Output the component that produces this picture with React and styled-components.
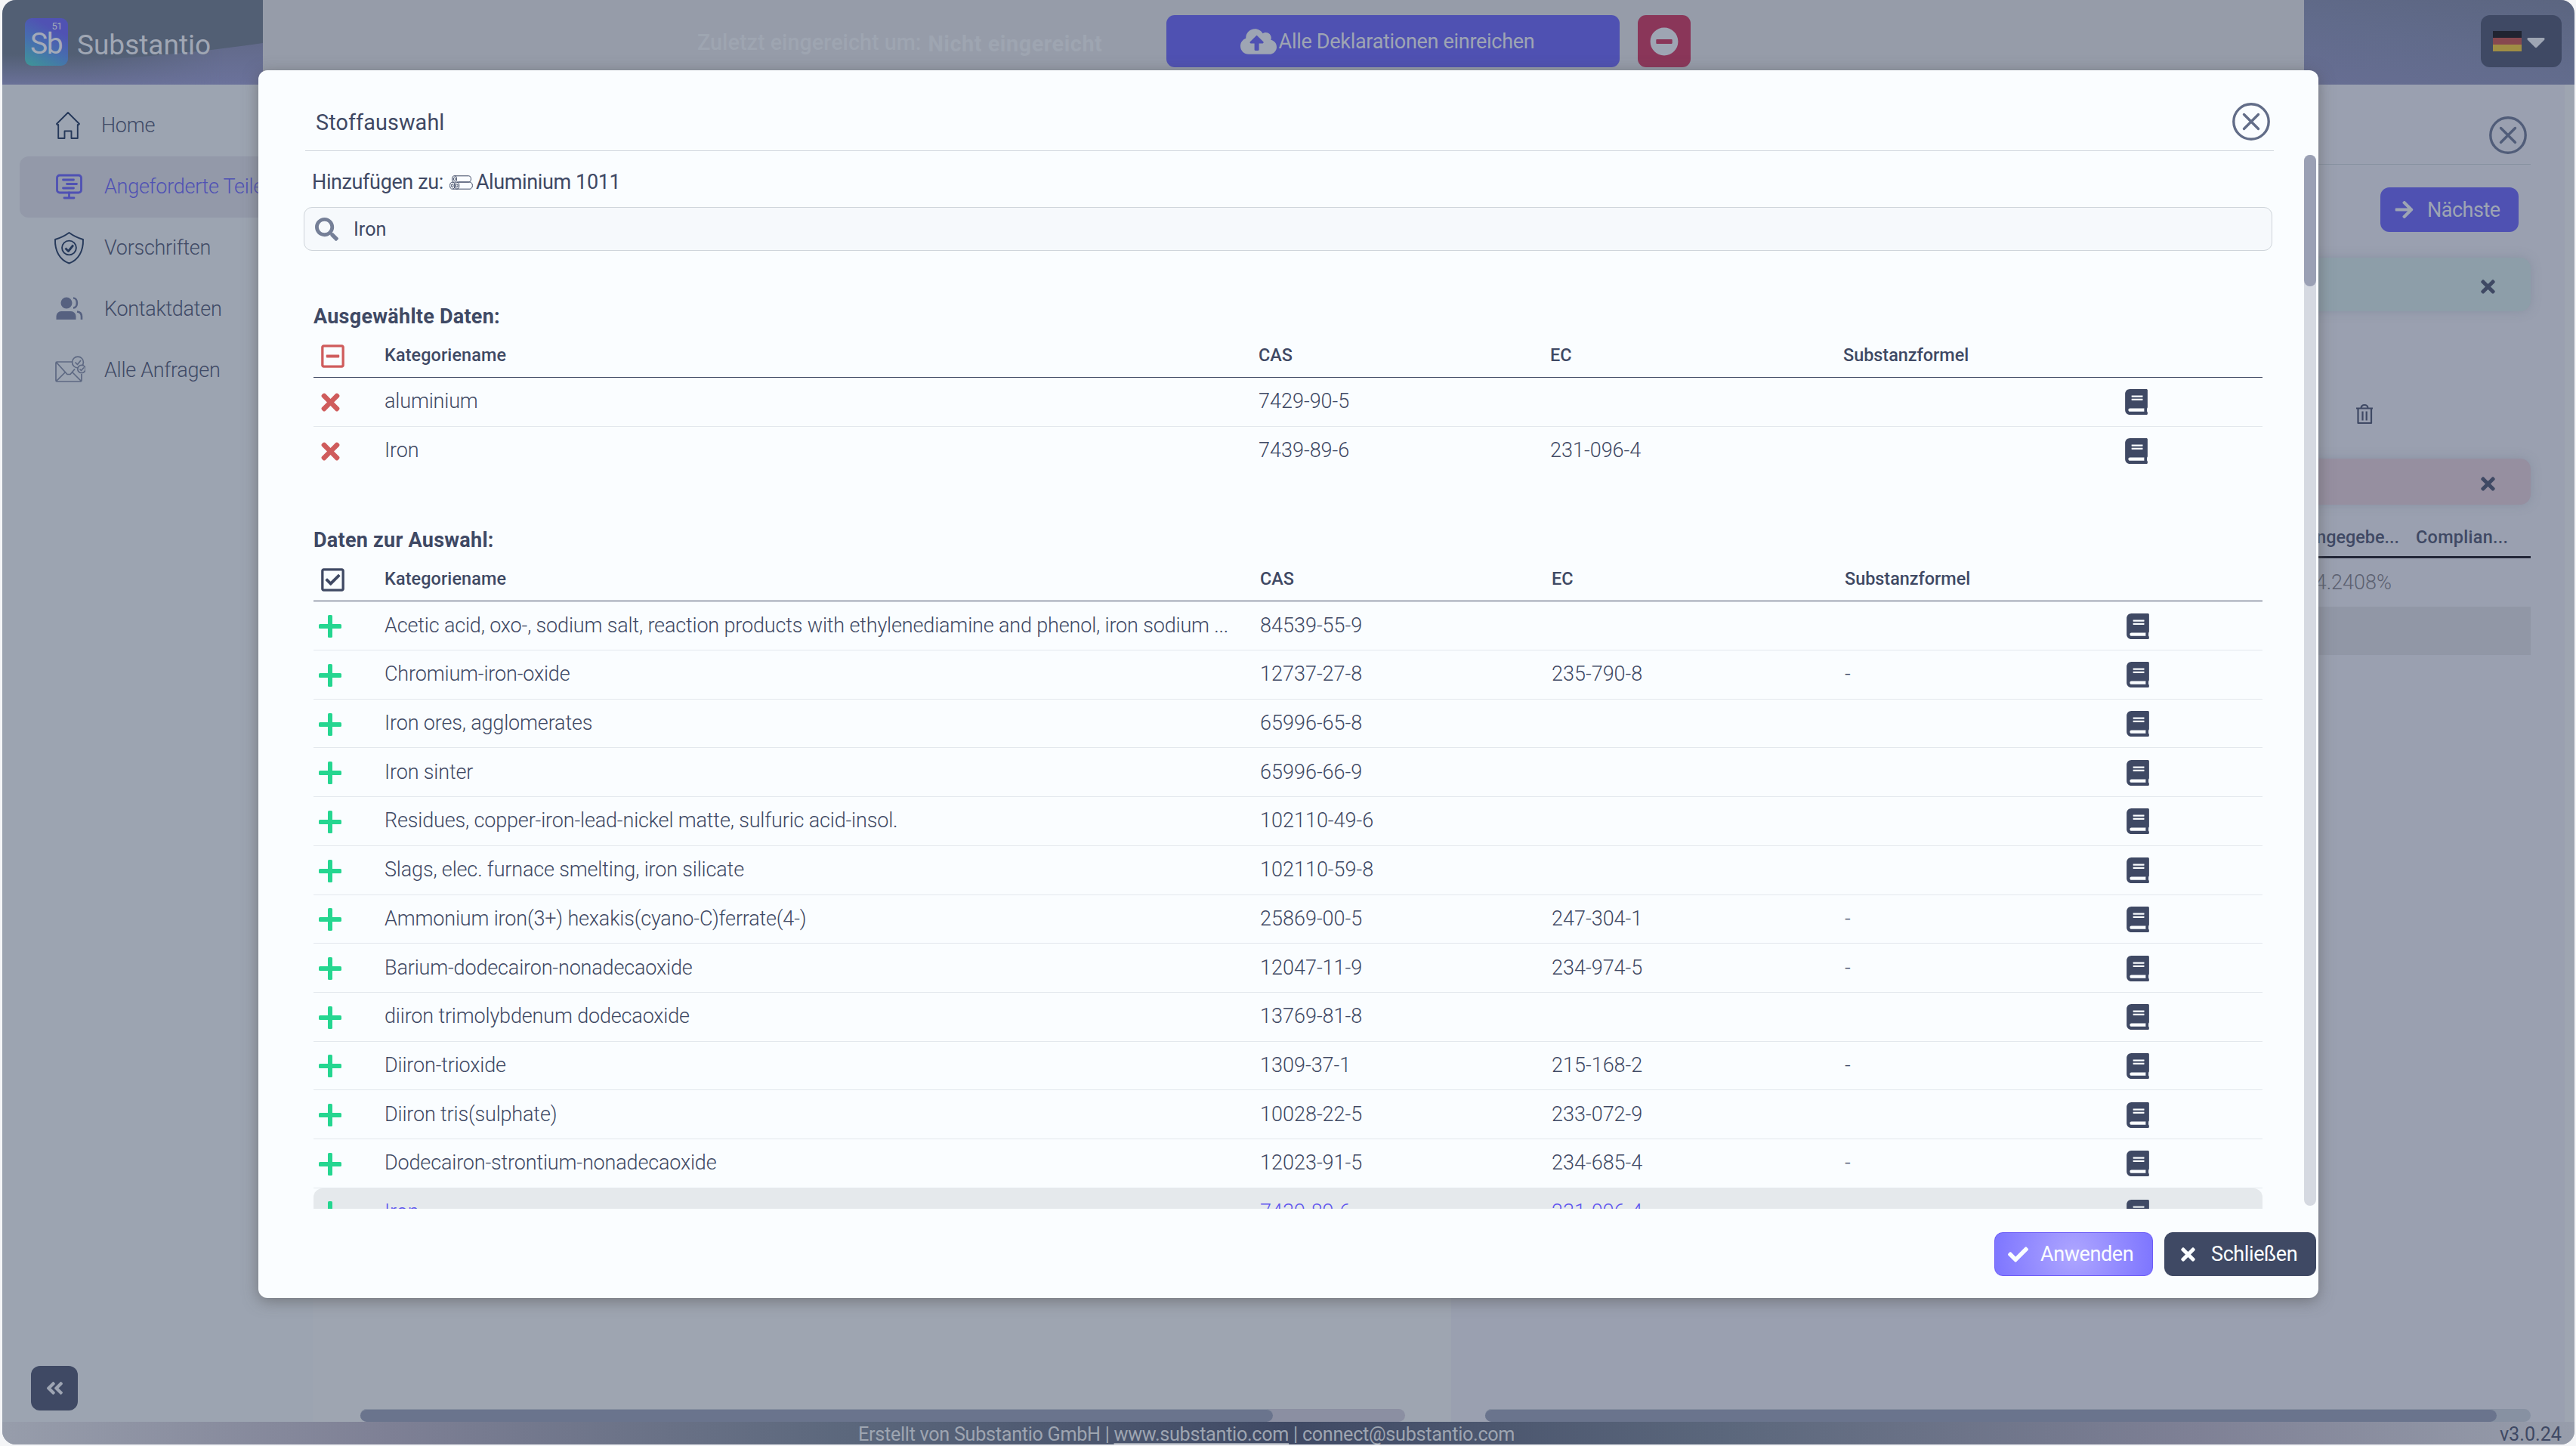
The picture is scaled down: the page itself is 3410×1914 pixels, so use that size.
import styled, { createGlobalStyle, css } from "styled-components";
import {
  FaAngleDoubleLeft,
  FaArrowRight,
  FaBook,
  FaCaretDown,
  FaCheck,
  FaCloudUploadAlt,
  FaMinusCircle,
  FaRegCheckSquare,
  FaRegMinusSquare,
  FaSearch,
  FaTimes,
} from "react-icons/fa";

const GlobalStyle = createGlobalStyle`
  * {
    box-sizing: border-box;
  }

  body {
    margin: 0;
    background: #f4f5f7;
    color: #3f4964;
    font-family: Roboto, "Liberation Sans", sans-serif;
    font-size: 27px;
    overflow: hidden;
  }

  svg {
    display: block;
    flex: none;
  }
`;

const Page = styled.div`
  width: 3410px;
  height: 1914px;
  padding: 0 2px 2px 3px;
`;

const Window = styled.div`
  position: relative;
  display: flex;
  flex-direction: column;
  height: 1912px;
  border-radius: 18px;
  overflow: hidden;
  background: #9ea5b1;
`;

/* top bar */

const TopBar = styled.header`
  display: flex;
  height: 112px;
`;

const Brand = styled.div`
  position: relative;
  display: flex;
  width: 345px;
  padding: 24px 0 0 30px;
  background: #525f74;
`;

const BrandWave = styled.svg`
  position: absolute;
  left: 0;
  top: 0;
`;

const LogoTile = styled.div`
  position: relative;
  width: 57px;
  height: 63px;
  padding: 19px 0 0 7px;
  border-radius: 9px;
  background: linear-gradient(28deg, #3e9796 0%, #466fae 40%, #5052b3 75%);
  color: #a3aab8;
  font-size: 39px;
  line-height: 30px;
  letter-spacing: -1.5px;
`;

const LogoNumber = styled.span`
  position: absolute;
  right: 8px;
  top: 4px;
  font-size: 13px;
  line-height: 14px;
  letter-spacing: -0.5px;
`;

const BrandName = styled.div`
  position: relative;
  margin: 14px 0 0 12px;
  color: #a0a7b4;
  font-size: 37px;
  line-height: 44px;
`;

const TopCenter = styled.div`
  display: flex;
  flex: 1;
  align-items: flex-start;
  padding: 20px 0 0 575px;
  background: #969ca9;
`;

const Submitted = styled.div`
  display: flex;
  gap: 9px;
  width: 621px;
  padding-top: 20px;
  color: #9ea5b1;
  font-size: 28.8px;
  font-weight: 500;
  line-height: 32px;
  white-space: nowrap;

  strong {
    padding-top: 2px;
    font-weight: 700;
    letter-spacing: 0.55px;
  }
`;

const TopButton = styled.div`
  display: flex;
  align-items: center;
  justify-content: center;
  gap: 3px;
  width: ${(p) => p.$width}px;
  height: 69px;
  margin-right: 24px;
  padding-right: ${(p) => p.$shift || 0}px;
  border-radius: 11px;
  background: ${(p) => p.$color};
  color: #9ea5b3;
  letter-spacing: -0.3px;
`;

const TopRight = styled.div`
  display: flex;
  justify-content: flex-end;
  width: 358px;
  padding: 20px 17px 0 0;
  background: linear-gradient(190deg, #5b6580 0%, #616b8b 50%, #676e93 100%);
`;

const LanguageButton = styled.div`
  display: flex;
  align-items: center;
  width: 107px;
  height: 69px;
  padding-left: 16px;
  border-radius: 12px;
  background: #3f4964;
  color: #9ea5b3;

  svg {
    margin-left: -1px;
  }
`;

const Flag = styled.div`
  width: 38px;
  height: 27px;
  background: linear-gradient(#202431 0 34%, #87484f 34% 65%, #9f8d44 65%);
`;

/* columns below the top bar */

const Columns = styled.div`
  display: flex;
  flex: 1;
  min-height: 0;
`;

const Sidebar = styled.nav`
  display: flex;
  flex-direction: column;
  width: 411px;
  padding: 14px 0 15px 23px;
  background: #9ca4b1;
`;

const NavItem = styled.div`
  display: flex;
  align-items: center;
  gap: ${(p) => (p.$indent ? 23 : 25)}px;
  height: 81px;
  padding: 0 0 2px ${(p) => (p.$indent ? 43 : 45)}px;
  border-radius: 12px;
  font-weight: 300;
  letter-spacing: -0.27px;
  white-space: nowrap;
  color: #3f4a66;

  ${(p) =>
    p.$active &&
    css`
      background: #9399a9;
      color: #4f51b4;
    `}
`;

const CollapseButton = styled.div`
  display: flex;
  align-items: center;
  justify-content: center;
  width: 62px;
  height: 59px;
  margin: auto 0 0 15px;
  border-radius: 12px;
  background: #3f4964;
  color: #9ea5b3;
`;

const PartsColumn = styled.section`
  display: flex;
  flex: 1;
  align-items: flex-end;
  padding: 0 61px 0 63px;
`;

const HorizontalScroll = styled.div`
  width: 100%;
  height: 17px;
  margin-top: auto;
  border-radius: 9px;
  background: ${(p) => p.$track};
`;

const HorizontalThumb = styled.div`
  width: ${(p) => p.$width}px;
  height: 17px;
  border-top: 1px solid #8791a2;
  border-radius: 9px;
  background: #6a748d;
`;

const DetailColumn = styled.section`
  display: flex;
  flex-direction: column;
  width: 1474px;
  margin-right: 13px;
  padding: 0 45px;
  background: #9aa0b0;
`;

const DetailHeader = styled.div`
  display: flex;
  align-items: center;
  justify-content: flex-end;
  height: 106px;
  padding: 29px 5px 0 0;
  border-bottom: 1px solid #8791a0;
`;

const NextButton = styled.div`
  display: flex;
  align-items: center;
  align-self: flex-end;
  gap: 17px;
  width: 183px;
  height: 59px;
  margin: 30px 16px 34px 0;
  padding-left: 18px;
  border-radius: 12px;
  background: #4f51b2;
  color: #9ea5b3;
  letter-spacing: -0.5px;
`;

const Notice = styled.div`
  display: flex;
  align-items: center;
  justify-content: flex-end;
  height: ${(p) => p.$height}px;
  padding: 6px 43px 0 0;
  border-radius: 14px;
  background: ${(p) => p.$color};
  box-shadow: 0 0 14px rgba(110, 120, 138, 0.35);
`;

const DeleteRow = styled.div`
  display: flex;
  justify-content: flex-end;
  height: 195px;
  padding: 122px 208px 0 0;
`;

const DetailTableHead = styled.div`
  display: flex;
  align-items: center;
  justify-content: flex-end;
  height: 71px;
  padding-top: 18px;
  border-bottom: 3px solid #222637;
  font-size: 23.4px;
  font-weight: 500;

  span:first-child {
    padding-right: 22px;
  }

  span:last-child {
    width: 152px;
    letter-spacing: 0.3px;
  }
`;

const DetailTableRow = styled.div`
  display: flex;
  align-items: center;
  justify-content: flex-end;
  height: 64px;
  padding-right: 184px;
  background: ${(p) => (p.$filled ? "#9197a6" : "none")};
  color: #5c6171;
  font-weight: 300;
`;

const Footer = styled.footer`
  display: grid;
  grid-template-columns: 1133px 1fr auto;
  align-items: center;
  height: 30px;
  padding: 3px 17px 0 0;
  background: linear-gradient(
    90deg,
    #979dab 0%,
    #7e8095 15%,
    #5b677c 33%,
    #3f4964 50%,
    #5b677c 67%,
    #7e8095 85%,
    #979dab 100%
  );
  color: #9ea5b1;
  font-size: 25.2px;
  line-height: 27px;

  span {
    grid-column: 2;
    letter-spacing: -0.29px;
  }

  u {
    text-underline-offset: 3px;
    text-decoration-thickness: 2px;
  }

  small {
    color: #3f4964;
    font-size: 25.2px;
  }
`;

/* substance dialog */

const Dialog = styled.div`
  position: absolute;
  left: 339px;
  top: 93px;
  display: flex;
  flex-direction: column;
  width: 2727px;
  height: 1625px;
  border-radius: 12px;
  background: #fafdff;
  box-shadow: 0 4px 20px rgba(80, 80, 80, 0.55);
`;

const DialogHeader = styled.div`
  display: flex;
  align-items: center;
  justify-content: space-between;
  width: 2606px;
  height: 107px;
  margin-left: 62px;
  padding: 30px 5px 0 14px;
  border-bottom: 1px solid #d2d7de;
  font-size: 28.8px;
  letter-spacing: 0.1px;

  span {
    padding-top: 2px;
  }
`;

const DialogBody = styled.div`
  display: flex;
  justify-content: space-between;
  height: 1400px;
  padding-right: 3px;
  overflow: hidden;
`;

const DialogContent = styled.div`
  width: 2606px;
  margin-left: 60px;
`;

const Target = styled.div`
  display: flex;
  align-items: center;
  height: 74px;
  padding: 7px 0 0 11px;
  letter-spacing: -0.38px;

  svg {
    margin: 2px 4px 0 8px;
  }
`;

const SearchBox = styled.div`
  display: flex;
  align-items: center;
  gap: 20px;
  height: 58px;
  padding-left: 14px;
  border: 1px solid #ced4da;
  border-radius: 11px;
  background: #f6f9fc;
  font-size: 25.2px;

  svg {
    color: #757f97;
  }
`;

const Section = styled.section`
  width: 2580px;
  margin: ${(p) => p.$top}px 0 0 13px;
`;

const SectionTitle = styled.h3`
  height: 40px;
  margin: 0;
  font-size: 27px;
  font-weight: 700;
  letter-spacing: 0.25px;
  line-height: 42px;
`;

const TableGrid = styled.div`
  display: grid;
  grid-template-columns: 93px ${(p) => p.$columns} 1fr;
  align-items: center;
`;

const TableHead = styled(TableGrid)`
  height: 62px;
  padding-top: 3px;
  border-bottom: 1px solid #3f4964;
  font-size: 23.4px;
  font-weight: 500;

  svg {
    margin: 3px 0 0 8px;
  }
`;

const TableRow = styled(TableGrid)`
  height: 64.7px;
  border-bottom: 1px solid ${(p) => (p.$last ? "transparent" : "#e3e8ed")};
  font-weight: 300;

  ${(p) =>
    p.$highlight &&
    css`
      border-radius: 12px;
      background: #e5e9ec;
      color: #5f56ee;
    `}
`;

const Cell = styled.div`
  padding-bottom: 1px;
  white-space: nowrap;
`;

const HeadNameCell = styled(Cell)`
  padding-left: 1px;
  letter-spacing: 0.12px;
`;

const NameCell = styled(Cell)`
  padding-left: 1px;
  letter-spacing: -0.16px;
`;

const ActionCell = styled.div`
  padding: 2px 0 0 ${(p) => p.$left}px;
`;

const BookCell = styled.div`
  padding-top: 1px;
  color: #3f4964;
`;

const ScrollTrack = styled.div`
  width: 16px;
  height: 1391px;
  margin-top: 5px;
  border-radius: 8px;
  background: #d5d9e1;
`;

const ScrollThumb = styled.div`
  width: 16px;
  height: 174px;
  border-radius: 8px;
  background: #9aa0b4;
`;

const DialogFooter = styled.div`
  display: flex;
  justify-content: flex-end;
  gap: 15px;
  padding: 31px 3px 0 0;
`;

const DialogButton = styled.button`
  display: flex;
  align-items: center;
  gap: ${(p) => p.$gap}px;
  width: ${(p) => p.$width}px;
  height: 58px;
  padding: 0 0 1px ${(p) => p.$left}px;
  border: 1px solid ${(p) => (p.$primary ? "#6c5cf7" : "#3f4964")};
  border-radius: 11px;
  background: ${(p) =>
    p.$primary
      ? "radial-gradient(circle, #aea6ff 0%, #7d75ff 100%)"
      : "#3f4964"};
  color: #fafdff;
  font-family: inherit;
  font-size: 27px;
  letter-spacing: -0.4px;

  svg {
    margin-top: 2px;
  }
`;

const CloseIcon = ({ color }) => (
  <svg width="50" height="50" viewBox="0 0 50 50" fill="none" stroke={color}>
    <circle cx="25" cy="25" r="23.2" strokeWidth="3.4" />
    <path d="M15.5 15.5l19 19M34.5 15.5l-19 19" strokeWidth="3.4" strokeLinecap="round" />
  </svg>
);

const PlusIcon = () => (
  <svg width="30" height="30" viewBox="0 0 30 30" fill="#25d690">
    <rect x="12" y="0" width="6" height="30" rx="1.6" />
    <rect x="0" y="12" width="30" height="6" rx="1.6" />
  </svg>
);

const HomeIcon = () => (
  <svg width="42" height="44" viewBox="0 0 42 44" fill="none" stroke="#26395a" strokeWidth="1.9" strokeLinejoin="round">
    <path d="M21 5 L36 20 L34.5 21.5 L33.8 21 V39 H25.5 V29.5 H16.5 V39 H8.2 V21 L7.5 21.5 L6 20 Z" />
  </svg>
);

const MonitorIcon = () => (
  <svg width="42" height="44" viewBox="0 0 42 44" fill="none" stroke="#4f51b4" strokeWidth="2.8" strokeLinecap="round">
    <rect x="4.5" y="7" width="32" height="23" rx="3.5" />
    <path d="M12.5 13h14M17.5 18.5h13M12.5 24h14M20.5 30v6M14 37h13" />
  </svg>
);

const ShieldIcon = () => (
  <svg width="42" height="46" viewBox="0 0 42 46" fill="none" stroke="#26395a" strokeWidth="1.9" strokeLinejoin="round">
    <path d="M20.5 3 C26 7 32 10 39 12 C39.5 27 33 39 20.5 43.5 C8 39 1.5 27 2 12 C9 10 15 7 20.5 3 Z" />
    <circle cx="20.5" cy="23" r="9.4" />
    <path d="M15.5 23.5l4 4 6.5-8" strokeWidth="2.8" />
  </svg>
);

const PeopleIcon = () => (
  <svg width="42" height="44" viewBox="0 0 42 44" fill="#566180">
    <circle cx="17" cy="14" r="7.5" />
    <path d="M3.5 36v-4.5a6.5 6.5 0 0 1 6.5-6.5h13a6.5 6.5 0 0 1 6.5 6.5V36z" />
    <path d="M26 7.5c6.5 0 6.5 13 0 13M31 25.5c4.5 .5 6 3 6 6.5v4" fill="none" stroke="#566180" strokeWidth="2.6" />
  </svg>
);

const MailIcon = () => (
  <svg width="42" height="44" viewBox="0 0 42 44" fill="none" stroke="#5d6882" strokeWidth="1.7" strokeLinejoin="round">
    <path d="M25 11H4.5a1.5 1.5 0 0 0-1.5 1.5v23a1.5 1.5 0 0 0 1.5 1.5h31a1.5 1.5 0 0 0 1.5-1.5V27M3.5 11.5l14.5 16h4l6-7M3.5 36.5l12-12M36.5 36.5l-12-12" />
    <circle cx="32" cy="11.5" r="7.4" />
    <circle cx="37" cy="20.5" r="5.2" fill="#9ca4b1" />
    <path d="M28.5 11.5l3 3 4.5-5.5M34.5 20.5l2 2 3.5-4" />
  </svg>
);

const PipesIcon = () => (
  <svg width="31" height="19" viewBox="0 0 31 19" fill="none" stroke="#3f4964" strokeWidth="1">
    <path d="M6.5 .8H25.5c4 0 4 8.2 0 8.2H10M12 9h15c4.5 0 4.5 9.2 0 9.2H4.5" />
    <ellipse cx="6.5" cy="5" rx="3" ry="4.2" />
    <ellipse cx="6.5" cy="5" rx="1.2" ry="2" />
    <ellipse cx="3.8" cy="13.7" rx="3.2" ry="4.5" />
    <ellipse cx="3.8" cy="13.7" rx="1.3" ry="2.2" />
    <ellipse cx="9.8" cy="13.7" rx="3" ry="4.5" />
    <ellipse cx="9.8" cy="13.7" rx="1.3" ry="2.2" />
  </svg>
);

const TrashIcon = () => (
  <svg width="24" height="28" viewBox="0 0 24 28" fill="none" stroke="#3f4964" strokeWidth="2.2" strokeLinejoin="round">
    <path d="M1 6.5h22M3.5 6.5v19.5h17.5v-19.5M7.5 6.5c0-6 9-6 9 0M9.5 10.5v12M14.7 10.5v12" />
  </svg>
);

const navItems = [
  { label: "Home", Icon: HomeIcon, indent: true },
  { label: "Angeforderte Teile", Icon: MonitorIcon, active: true },
  { label: "Vorschriften", Icon: ShieldIcon },
  { label: "Kontaktdaten", Icon: PeopleIcon },
  { label: "Alle Anfragen", Icon: MailIcon },
];

const selected = [
  { name: "aluminium", cas: "7429-90-5" },
  { name: "Iron", cas: "7439-89-6", ec: "231-096-4" },
];

const available = [
  {
    name: "Acetic acid, oxo-, sodium salt, reaction products with ethylenediamine and phenol, iron sodium ...",
    cas: "84539-55-9",
  },
  { name: "Chromium-iron-oxide", cas: "12737-27-8", ec: "235-790-8", formula: "-" },
  { name: "Iron ores, agglomerates", cas: "65996-65-8" },
  { name: "Iron sinter", cas: "65996-66-9" },
  { name: "Residues, copper-iron-lead-nickel matte, sulfuric acid-insol.", cas: "102110-49-6" },
  { name: "Slags, elec. furnace smelting, iron silicate", cas: "102110-59-8" },
  { name: "Ammonium iron(3+) hexakis(cyano-C)ferrate(4-)", cas: "25869-00-5", ec: "247-304-1", formula: "-" },
  { name: "Barium-dodecairon-nonadecaoxide", cas: "12047-11-9", ec: "234-974-5", formula: "-" },
  { name: "diiron trimolybdenum dodecaoxide", cas: "13769-81-8" },
  { name: "Diiron-trioxide", cas: "1309-37-1", ec: "215-168-2", formula: "-" },
  { name: "Diiron tris(sulphate)", cas: "10028-22-5", ec: "233-072-9" },
  { name: "Dodecairon-strontium-nonadecaoxide", cas: "12023-91-5", ec: "234-685-4", formula: "-" },
  { name: "Iron", cas: "7439-89-6", ec: "231-096-4", highlight: true },
];

const SubstanceTable = ({ title, top, columns, headIcon, rowIcon, rowIconLeft, rows }) => (
  <Section $top={top}>
    <SectionTitle>{title}</SectionTitle>
    <TableHead $columns={columns}>
      {headIcon}
      <HeadNameCell>Kategoriename</HeadNameCell>
      <Cell>CAS</Cell>
      <Cell>EC</Cell>
      <Cell>Substanzformel</Cell>
    </TableHead>
    {rows.map((row, i) => (
      <TableRow
        key={row.name}
        $columns={columns}
        $highlight={row.highlight}
        $last={i === rows.length - 1}
      >
        <ActionCell $left={rowIconLeft}>{rowIcon}</ActionCell>
        <NameCell>{row.name}</NameCell>
        <Cell>{row.cas}</Cell>
        <Cell>{row.ec}</Cell>
        <Cell>{row.formula}</Cell>
        <BookCell>
          <FaBook size={34} />
        </BookCell>
      </TableRow>
    ))}
  </Section>
);

const SubstanceDialog = () => (
  <Dialog>
    <DialogHeader>
      <span>Stoffauswahl</span>
      <CloseIcon color="#626d88" />
    </DialogHeader>
    <DialogBody>
      <DialogContent>
        <Target>
          Hinzufügen zu:
          <PipesIcon />
          Aluminium 1011
        </Target>
        <SearchBox>
          <FaSearch size={31} />
          Iron
        </SearchBox>
        <SubstanceTable
          title="Ausgewählte Daten:"
          top={66}
          columns="1158px 386px 388px 371px"
          headIcon={<FaRegMinusSquare size={35} color="#cf5c5c" />}
          rowIcon={<FaTimes size={35} color="#cf5c5c" />}
          rowIconLeft={5}
          rows={selected}
        />
        <SubstanceTable
          title="Daten zur Auswahl:"
          top={65}
          columns="1160px 386px 388px 371px"
          headIcon={<FaRegCheckSquare size={35} />}
          rowIcon={<PlusIcon />}
          rowIconLeft={7}
          rows={available}
        />
      </DialogContent>
      <ScrollTrack>
        <ScrollThumb />
      </ScrollTrack>
    </DialogBody>
    <DialogFooter>
      <DialogButton $primary $width={210} $left={17} $gap={16}>
        <FaCheck size={27} />
        Anwenden
      </DialogButton>
      <DialogButton $width={201} $left={17} $gap={17}>
        <FaTimes size={27} />
        Schließen
      </DialogButton>
    </DialogFooter>
  </Dialog>
);

const App = () => (
  <Page>
    <GlobalStyle />
    <Window>
      <TopBar>
        <Brand>
          <BrandWave width="345" height="112" viewBox="0 0 345 112">
            <defs>
              <linearGradient id="wave" x1="0" y1="0" x2="0" y2="1">
                <stop offset="0" stopColor="#626a8a" />
                <stop offset="1" stopColor="#6b729b" />
              </linearGradient>
              <linearGradient id="fade" x1="0" y1="0" x2="0" y2="1">
                <stop offset="0" stopColor="#6a7198" stopOpacity="0" />
                <stop offset="1" stopColor="#6a7198" />
              </linearGradient>
              <linearGradient id="side" x1="0" y1="0" x2="1" y2="0">
                <stop offset="0.3" stopColor="#fff" stopOpacity="0" />
                <stop offset="0.85" stopColor="#fff" />
              </linearGradient>
              <mask id="right">
                <rect width="345" height="112" fill="url(#side)" />
              </mask>
            </defs>
            <path d="M0 72H345V112H0Z" fill="url(#fade)" />
            <path d="M0 84C130 82 240 72 345 57V112H0Z" fill="url(#wave)" mask="url(#right)" />
          </BrandWave>
          <LogoTile>
            <LogoNumber>51</LogoNumber>
            Sb
          </LogoTile>
          <BrandName>Substantio</BrandName>
        </Brand>
        <TopCenter>
          <Submitted>
            <span>Zuletzt eingereicht um:</span>
            <strong>Nicht eingereicht</strong>
          </Submitted>
          <TopButton $width={600} $color="#4f51b2" $shift={15}>
            <FaCloudUploadAlt size={48} />
            Alle Deklarationen einreichen
          </TopButton>
          <TopButton $width={70} $color="#8a3659">
            <FaMinusCircle size={38} />
          </TopButton>
        </TopCenter>
        <TopRight>
          <LanguageButton>
            <Flag />
            <FaCaretDown size={40} />
          </LanguageButton>
        </TopRight>
      </TopBar>
      <Columns>
        <Sidebar>
          {navItems.map(({ label, Icon, active, indent }) => (
            <NavItem key={label} $active={active} $indent={indent}>
              <Icon />
              {label}
            </NavItem>
          ))}
          <CollapseButton>
            <FaAngleDoubleLeft size={27} />
          </CollapseButton>
        </Sidebar>
        <PartsColumn>
          <HorizontalScroll $track="#8b8fa2">
            <HorizontalThumb $width={1208} />
          </HorizontalScroll>
        </PartsColumn>
        <DetailColumn>
          <DetailHeader>
            <CloseIcon color="#515d79" />
          </DetailHeader>
          <NextButton>
            <FaArrowRight size={27} />
            Nächste
          </NextButton>
          <Notice $color="#8d9ea9" $height={71}>
            <FaTimes size={27} />
          </Notice>
          <DeleteRow>
            <TrashIcon />
          </DeleteRow>
          <Notice $color="#968fa0" $height={61}>
            <FaTimes size={27} />
          </Notice>
          <DetailTableHead>
            <span>Angegebe...</span>
            <span>Complian...</span>
          </DetailTableHead>
          <DetailTableRow>4.2408%</DetailTableRow>
          <DetailTableRow $filled />
          <HorizontalScroll $track="#8791a2">
            <HorizontalThumb $width={1339} />
          </HorizontalScroll>
        </DetailColumn>
      </Columns>
      <Footer>
        <span>
          Erstellt von Substantio GmbH | <u>www.substantio.com</u> | connect@substantio.com
        </span>
        <small>v3.0.24</small>
      </Footer>
      <SubstanceDialog />
    </Window>
  </Page>
);

export default App;
